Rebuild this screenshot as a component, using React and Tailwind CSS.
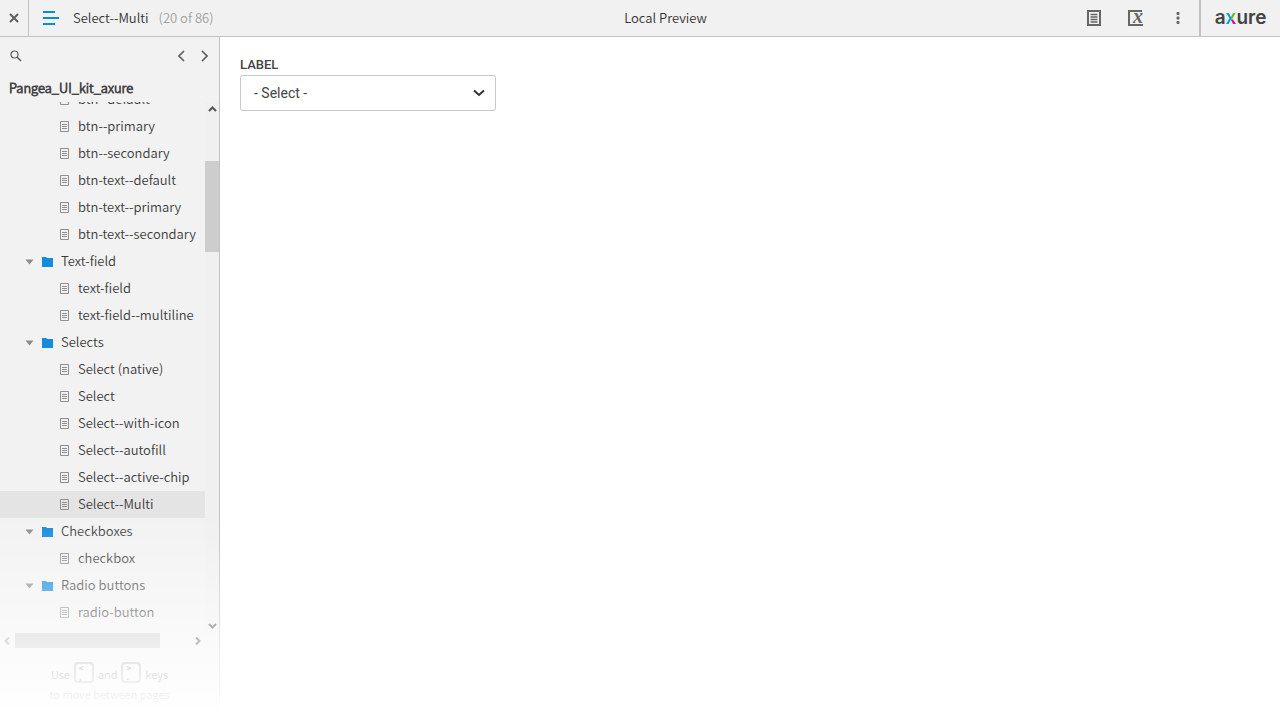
import { useState } from "react";
import clsx from "clsx";

const tree = [
    { name: "btn--default" },
    { name: "btn--primary" },
    { name: "btn--secondary" },
    { name: "btn-text--default" },
    { name: "btn-text--primary" },
    { name: "btn-text--secondary" },
    { name: "Text-field", folder: true },
    { name: "text-field" },
    { name: "text-field--multiline" },
    { name: "Selects", folder: true },
    { name: "Select (native)" },
    { name: "Select" },
    { name: "Select--with-icon" },
    { name: "Select--autofill" },
    { name: "Select--active-chip" },
    { name: "Select--Multi" },
    { name: "Checkboxes", folder: true },
    { name: "checkbox" },
    { name: "Radio buttons", folder: true },
    { name: "radio-button" },
];

function Chevron({ className, d, width = 7, height = 12, strokeWidth = 1.6 }) {
    return (
        <svg
            width={width}
            height={height}
            viewBox={`0 0 ${width} ${height}`}
            fill="none"
            stroke="currentColor"
            strokeWidth={strokeWidth}
            className={className}
        >
            <path d={d} />
        </svg>
    );
}

function PageIcon() {
    return (
        <svg width="10" height="11" viewBox="0 0 10 11" fill="none" stroke="#8f8f8f" className="shrink-0">
            <path d="M.5 .5h8v10h-8z" />
            <path d="M2 3.5h5M2 5.5h5M2 7.5h5" />
        </svg>
    );
}

function FolderIcon() {
    return (
        <svg width="11" height="10" viewBox="0 0 11 10" className="shrink-0">
            <path fill="#138cdd" d="M0 0h4l1 1h6v9H0z" />
        </svg>
    );
}

function TreeRow({ item, selected, onSelect }) {
    return (
        <li>
            <button
                type="button"
                onClick={() => onSelect(item.name)}
                className={clsx(
                    "flex h-[27px] w-full items-center text-left whitespace-nowrap",
                    item.folder ? "pl-[25px]" : "pl-[60px]",
                    selected && "bg-[#e4e4e4]"
                )}
            >
                {item.folder ? (
                    <>
                        <svg width="9" height="6" viewBox="0 0 9 6" className="mr-2 shrink-0">
                            <path fill="#8c8c8c" d="M.5 .5h8l-4 5z" />
                        </svg>
                        <FolderIcon />
                    </>
                ) : (
                    <PageIcon />
                )}
                <span className="ml-2 pb-0.5">{item.name}</span>
            </button>
        </li>
    );
}

function Header() {
    return (
        <header className="flex h-[37px] shrink-0 items-stretch border-b border-[#c2c2c2] bg-[#f1f1f1] text-[#333]">
            <div className="flex grow basis-[51px] items-center">
                <button
                    type="button"
                    aria-label="Close"
                    className="flex w-[29px] items-center justify-center self-stretch border-r border-[#c2c2c2]"
                >
                    <svg width="10" height="10" viewBox="0 0 10 10" stroke="#5e5e5e" strokeWidth="2">
                        <path d="M1 1l8 8M9 1L1 9" />
                    </svg>
                </button>
                <button type="button" aria-label="Project pages" className="ml-[14px]">
                    <svg width="16" height="14" viewBox="0 0 16 14" fill="#008fd0">
                        <rect width="12" height="2" />
                        <rect y="6" width="16" height="2" />
                        <rect y="12" width="12" height="2" />
                    </svg>
                </button>
                <span className="ml-[14px]">Select--Multi</span>
                <span className="ml-[10px] text-[#a0a0a0]">(20 of 86)</span>
            </div>

            <div className="flex items-center">Local Preview</div>

            <div className="flex grow basis-0 items-center justify-end">
                <button type="button" aria-label="Documentation">
                    <svg width="14" height="16" viewBox="0 0 14 16" fill="none" stroke="#666">
                        <path strokeWidth="2" d="M1 1h12v14H1z" />
                        <path strokeWidth="1.4" d="M3.5 4.5h7M3.5 7h7M3.5 9.5h7M3.5 12h7" />
                    </svg>
                </button>
                <button type="button" aria-label="Console" className="ml-[27px]">
                    <svg width="17" height="16" viewBox="0 0 17 16" className="overflow-visible">
                        <path fill="none" stroke="#666" strokeWidth="2" d="M14 1H1v14h13v-1" />
                        <text
                            x="5"
                            y="13"
                            fill="#666"
                            fontSize="20"
                            fontStyle="italic"
                            fontWeight="bold"
                            fontFamily="Liberation Serif, serif"
                        >
                            x
                        </text>
                    </svg>
                </button>
                <button type="button" aria-label="More" className="mr-[7px] ml-[19px] px-3">
                    <svg width="4" height="12" viewBox="0 0 4 12" fill="#666">
                        <rect x=".5" width="3" height="3" rx="1" />
                        <rect x=".5" y="4.5" width="3" height="3" rx="1" />
                        <rect x=".5" y="9" width="3" height="3" rx="1" />
                    </svg>
                </button>
                <a
                    href="#axure"
                    className="flex w-[81px] items-center justify-center self-stretch border-l-2 border-[#c2c2c2] font-[Inter,sans-serif] text-[19px] leading-6 font-semibold text-[#444]"
                >
                    a
                    <span className="bg-[conic-gradient(at_50%_60%,#6cb52d_0deg_90deg,#e6007e_90deg_180deg,#009fe3_180deg_360deg)] bg-clip-text text-transparent">
                        x
                    </span>
                    ure
                </a>
            </div>
        </header>
    );
}

function KeyCap({ top, bottom }) {
    return (
        <kbd className="flex h-[21px] w-5 flex-col rounded border-2 border-[#a8a8a8] pl-[3px] text-left font-[Roboto,sans-serif] text-[9px] leading-[9px] font-bold">
            <span>{top}</span>
            <span>{bottom}</span>
        </kbd>
    );
}

function Sidebar({ selected, onSelect }) {
    return (
        <aside className="relative flex w-[220px] shrink-0 flex-col border-r border-[#c2c2c2] bg-[#f2f2f2]">
            <div className="flex h-[38px] shrink-0 items-center pr-[11px] pl-[10px] text-[#5e5e5e]">
                <button type="button" aria-label="Search" className="mr-auto">
                    <svg width="12" height="12" viewBox="0 0 12 12" fill="none" stroke="currentColor">
                        <circle cx="4.5" cy="4.5" r="3.5" strokeWidth="1.2" />
                        <path strokeWidth="1.6" d="M7 7l4 4" />
                    </svg>
                </button>
                <button type="button" aria-label="Previous page" className="mr-4">
                    <Chevron d="M6 1L1 6l5 5" />
                </button>
                <button type="button" aria-label="Next page">
                    <Chevron d="M1 1l5 5-5 5" />
                </button>
            </div>

            <h1 className="h-[27px] shrink-0 pl-[9px] leading-[25px] font-light text-[#444] [-webkit-text-stroke:0.06em_#444]">
                Pangea_UI_kit_axure
            </h1>

            <div className="flex min-h-0 flex-1">
                <ul className="flex min-w-0 flex-1 flex-col justify-end overflow-hidden pb-[7px]">
                    {tree.map((item) => (
                        <TreeRow
                            key={item.name}
                            item={item}
                            selected={item.name === selected}
                            onSelect={onSelect}
                        />
                    ))}
                </ul>

                <div className="flex w-[14px] shrink-0 flex-col items-center bg-[#f0f0f0] pt-1 pb-1 text-[#555]">
                    <Chevron width={9} height={6} strokeWidth={2} d="M1 5l3.5-3.5L8 5" className="shrink-0" />
                    <div className="flex w-full flex-1 flex-col">
                        <div className="flex-[49]" />
                        <div className="flex-[91] bg-[#cdcdcd]" />
                        <div className="flex-[370]" />
                    </div>
                    <Chevron width={9} height={6} strokeWidth={2} d="M1 1l3.5 3.5L8 1" className="shrink-0" />
                </div>
            </div>

            <div className="flex h-[15px] shrink-0 items-center pr-[18px] pl-1">
                <Chevron width={6} height={8} strokeWidth={2} d="M5 .5L1.5 4 5 7.5" className="mr-[5px] text-[#a3a3a3]" />
                <div className="flex h-full flex-1">
                    <div className="w-[145px] bg-[#cdcdcd]" />
                </div>
                <Chevron width={6} height={8} strokeWidth={2} d="M1 .5L4.5 4 1 7.5" className="text-[#555]" />
            </div>

            <div className="h-[69px] shrink-0 pt-[14px] text-center text-[11px] leading-5 text-[#6e6e6e]">
                <p className="flex items-start justify-center gap-1">
                    <span className="pt-0.5">Use</span>
                    <KeyCap top="<" bottom="," />
                    <span className="pt-0.5">and</span>
                    <KeyCap top=">" bottom="." />
                    <span className="pt-0.5">keys</span>
                </p>
                <p>to move between pages</p>
            </div>

            <div className="pointer-events-none absolute -right-px bottom-0 left-0 h-[200px] bg-linear-to-b from-white/0 to-white" />
        </aside>
    );
}

function App() {
    const [selected, setSelected] = useState("Select--Multi");

    return (
        <div className="flex h-screen flex-col bg-white font-['Noto_Sans_CJK_SC',sans-serif] text-[13px] font-[350] text-[#3c3c3c]">
            <Header />

            <div className="flex min-h-0 flex-1">
                <Sidebar selected={selected} onSelect={setSelected} />

                <main className="flex-1 px-5 pt-[19px] font-[Roboto,sans-serif] font-normal">
                    <label htmlFor="select" className="mb-0.5 block text-[13px] leading-[17px] font-medium text-[#444]">
                        LABEL
                    </label>
                    <div className="relative w-64">
                        <select
                            id="select"
                            className="h-9 w-full appearance-none rounded-[3px] border border-[#c8c8c8] bg-white px-[13px] text-[14px] text-[#444]"
                        >
                            <option>- Select -</option>
                        </select>
                        <Chevron
                            width={12}
                            height={8}
                            strokeWidth={2}
                            d="M1 1.5l5 4.5 5-4.5"
                            className="pointer-events-none absolute top-[14px] right-[11px] text-[#333]"
                        />
                    </div>
                </main>
            </div>
        </div>
    );
}

export default App;
